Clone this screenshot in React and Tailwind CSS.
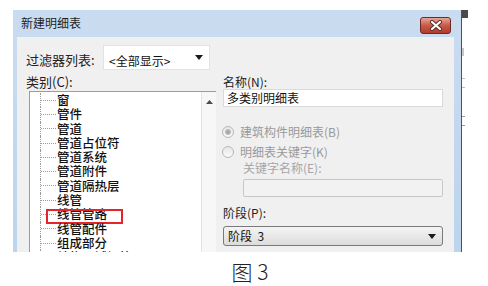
const items = ['窗', '管件', '管道', '管道占位符', '管道系统', '管道附件', '管道隔热层', '线管', '线管管路', '线管配件', '组成部分', '结构区域钢筋']

const CloseButton = () => (
  <div className="mt-[7px] w-[31px] h-[17px] rounded-[3px] border border-[#6b2a24] bg-gradient-to-b from-[#e8a597] via-[#c75a48] to-[#b23a2a] flex items-center justify-center">
    <svg width="14" height="11" viewBox="0 0 14 11">
      <path d="M3 2 L11 9 M11 2 L3 9" stroke="#5a2a26" strokeWidth="4" strokeLinecap="round" />
      <path d="M3 2 L11 9 M11 2 L3 9" stroke="#ffffff" strokeWidth="2.2" strokeLinecap="round" />
    </svg>
  </div>
)

const DownArrow = () => (
  <svg width="8" height="5" viewBox="0 0 8 5">
    <path d="M0 0 L8 0 L4 5 Z" fill="#1a1a1a" />
  </svg>
)

const Radio = ({ checked }) => (
  <div className="w-[12px] h-[12px] rounded-full border border-[#b8b8b8] bg-gradient-to-b from-[#e6e6e6] to-[#fafafa] flex items-center justify-center">
    {checked && <div className="w-[6px] h-[6px] rounded-full bg-[#a9a9a9] border border-[#bdbdbd]" />}
  </div>
)

const TreeRow = ({ label, marked }) => (
  <div className="h-[14.3px] flex items-stretch relative">
    <div className="w-[10px]" />
    <div className="w-[16px] border-l border-dotted border-[#9a9a9a] flex items-center">
      <div className="w-full border-t border-dotted border-[#9a9a9a]" />
    </div>
    <span className="ml-[1px] text-[12.5px] leading-[14px] text-[#111] font-medium whitespace-nowrap">{label}</span>
    {marked && <div className="absolute left-[16px] top-[2px] w-[77px] h-[15px] border-2 border-[#e3262b]" />}
  </div>
)

export default function App() {
  return (
    <div className="w-[488px] h-[286px] bg-white overflow-hidden font-['Noto_Sans_CJK_SC','Liberation_Sans',sans-serif] text-black">
      <div className="flex pt-[10px] pl-[13px]">
        {/* dialog */}
        <div className="w-[449px] h-[242px] flex flex-col bg-gradient-to-b from-[#cadcf0] to-[#bcd4ee] border-r border-[#3d5770]">
          <div className="h-[27px] flex justify-between items-start pl-[8px] pr-[10px]">
            <span className="pt-[6px] text-[12px] leading-[14px] text-[#1e1e1e]">新建明细表</span>
            <CloseButton />
          </div>

          <div className="flex-1 ml-[4px] mr-[7px] bg-[#f0f0f0] pl-[9px] pt-[8px] flex flex-col overflow-hidden">
            {/* filter */}
            <div className="flex items-center h-[25px]">
              <span className="w-[77px] text-[13px] leading-[14px] pt-[5px] text-[#222]">过滤器列表:</span>
              <div className="w-[107px] h-[25px] bg-white border border-[#e2e2e2] flex items-center justify-between pl-[5px] pr-[6px]">
                <span className="text-[12px] leading-[14px] pt-[6px] text-[#111]">&lt;全部显示&gt;</span>
                <DownArrow />
              </div>
            </div>

            <div className="flex mt-[5px] flex-1">
              {/* left: categories */}
              <div className="w-[190px] flex flex-col">
                <span className="h-[14px] text-[13px] leading-[14px] text-[#222]">类别(C):</span>
                <div className="mt-[2px] ml-[3px] w-[187px] flex-1 flex bg-white border-l border-t border-[#9c9c9c] overflow-hidden">
                  <div className="flex-1 pt-[1px] overflow-hidden">
                    {items.map((it) => (
                      <TreeRow key={it} label={it} marked={it === '线管管路'} />
                    ))}
                  </div>
                  <div className="w-[15px] bg-[#f7f7f7] border-l border-[#e2e2e2] flex flex-col justify-between items-center">
                    <svg className="mt-[8px]" width="7" height="4" viewBox="0 0 7 4">
                      <path d="M0 4 L7 4 L3.5 0 Z" fill="#4a4a4a" />
                    </svg>
                    <div className="w-[14px] h-[6px] border border-b-0 border-[#a8a8a8] rounded-t-[2px] bg-gradient-to-b from-[#f6f6f6] to-[#dedede]" />
                  </div>
                </div>
              </div>

              {/* right: details */}
              <div className="ml-[7px] w-[220px] flex flex-col">
                <span className="h-[14px] text-[12px] leading-[14px] text-[#222]">名称(N):</span>
                <div className="h-[18px] bg-white border border-[#dadada] pl-[3px] text-[12px] leading-[16px] text-[#111]">多类别明细表</div>

                <div className="mt-[17px] h-[16px] flex items-center gap-[6px] -ml-[1px]">
                  <Radio checked />
                  <span className="text-[12px] leading-[14px] text-[#9a9a9a]">建筑构件明细表(B)</span>
                </div>
                <div className="mt-[4px] h-[16px] flex items-center gap-[6px] -ml-[1px]">
                  <Radio />
                  <span className="text-[12px] leading-[14px] text-[#9a9a9a]">明细表关键字(K)</span>
                </div>
                <span className="mt-[1px] ml-[20px] h-[14px] text-[12px] leading-[14px] text-[#a6a6a6]">关键字名称(E):</span>
                <div className="mt-[4px] ml-[20px] w-[200px] h-[18px] rounded-[2px] bg-[#f2f2f2] border border-[#c8c8c8]" />

                <span className="mt-[9px] h-[14px] text-[12px] leading-[14px] text-[#222]">阶段(P):</span>
                <div className="mt-[6px] h-[20px] rounded-[3px] border border-[#7a7a7a] bg-gradient-to-b from-[#f4f4f4] to-[#dcdcdc] flex items-center justify-between pl-[4px] pr-[6px]">
                  <span className="text-[12px] leading-[14px] text-[#111] whitespace-pre">阶段  3</span>
                  <DownArrow />
                </div>
              </div>
            </div>
          </div>
        </div>

        {/* sliver of a window behind */}
        <div className="w-[6px] h-[242px] flex flex-col">
          <div className="h-[8px] bg-[#4a4a4a]" />
          <div className="mt-[30px] h-[8px] w-[2px] bg-[#c8c8c8]" />
          <div className="mt-[22px] h-[10px] w-[3px] border-y border-[#bdbdbd]" />
          <div className="mt-[28px] h-[10px] w-[3px] border-y border-[#9a9a9a]" />
        </div>
      </div>

      <div className="mt-[8px] pl-[12px] text-center text-[21px] leading-[22px] font-light text-[#222]">图 3</div>
    </div>
  )
}
